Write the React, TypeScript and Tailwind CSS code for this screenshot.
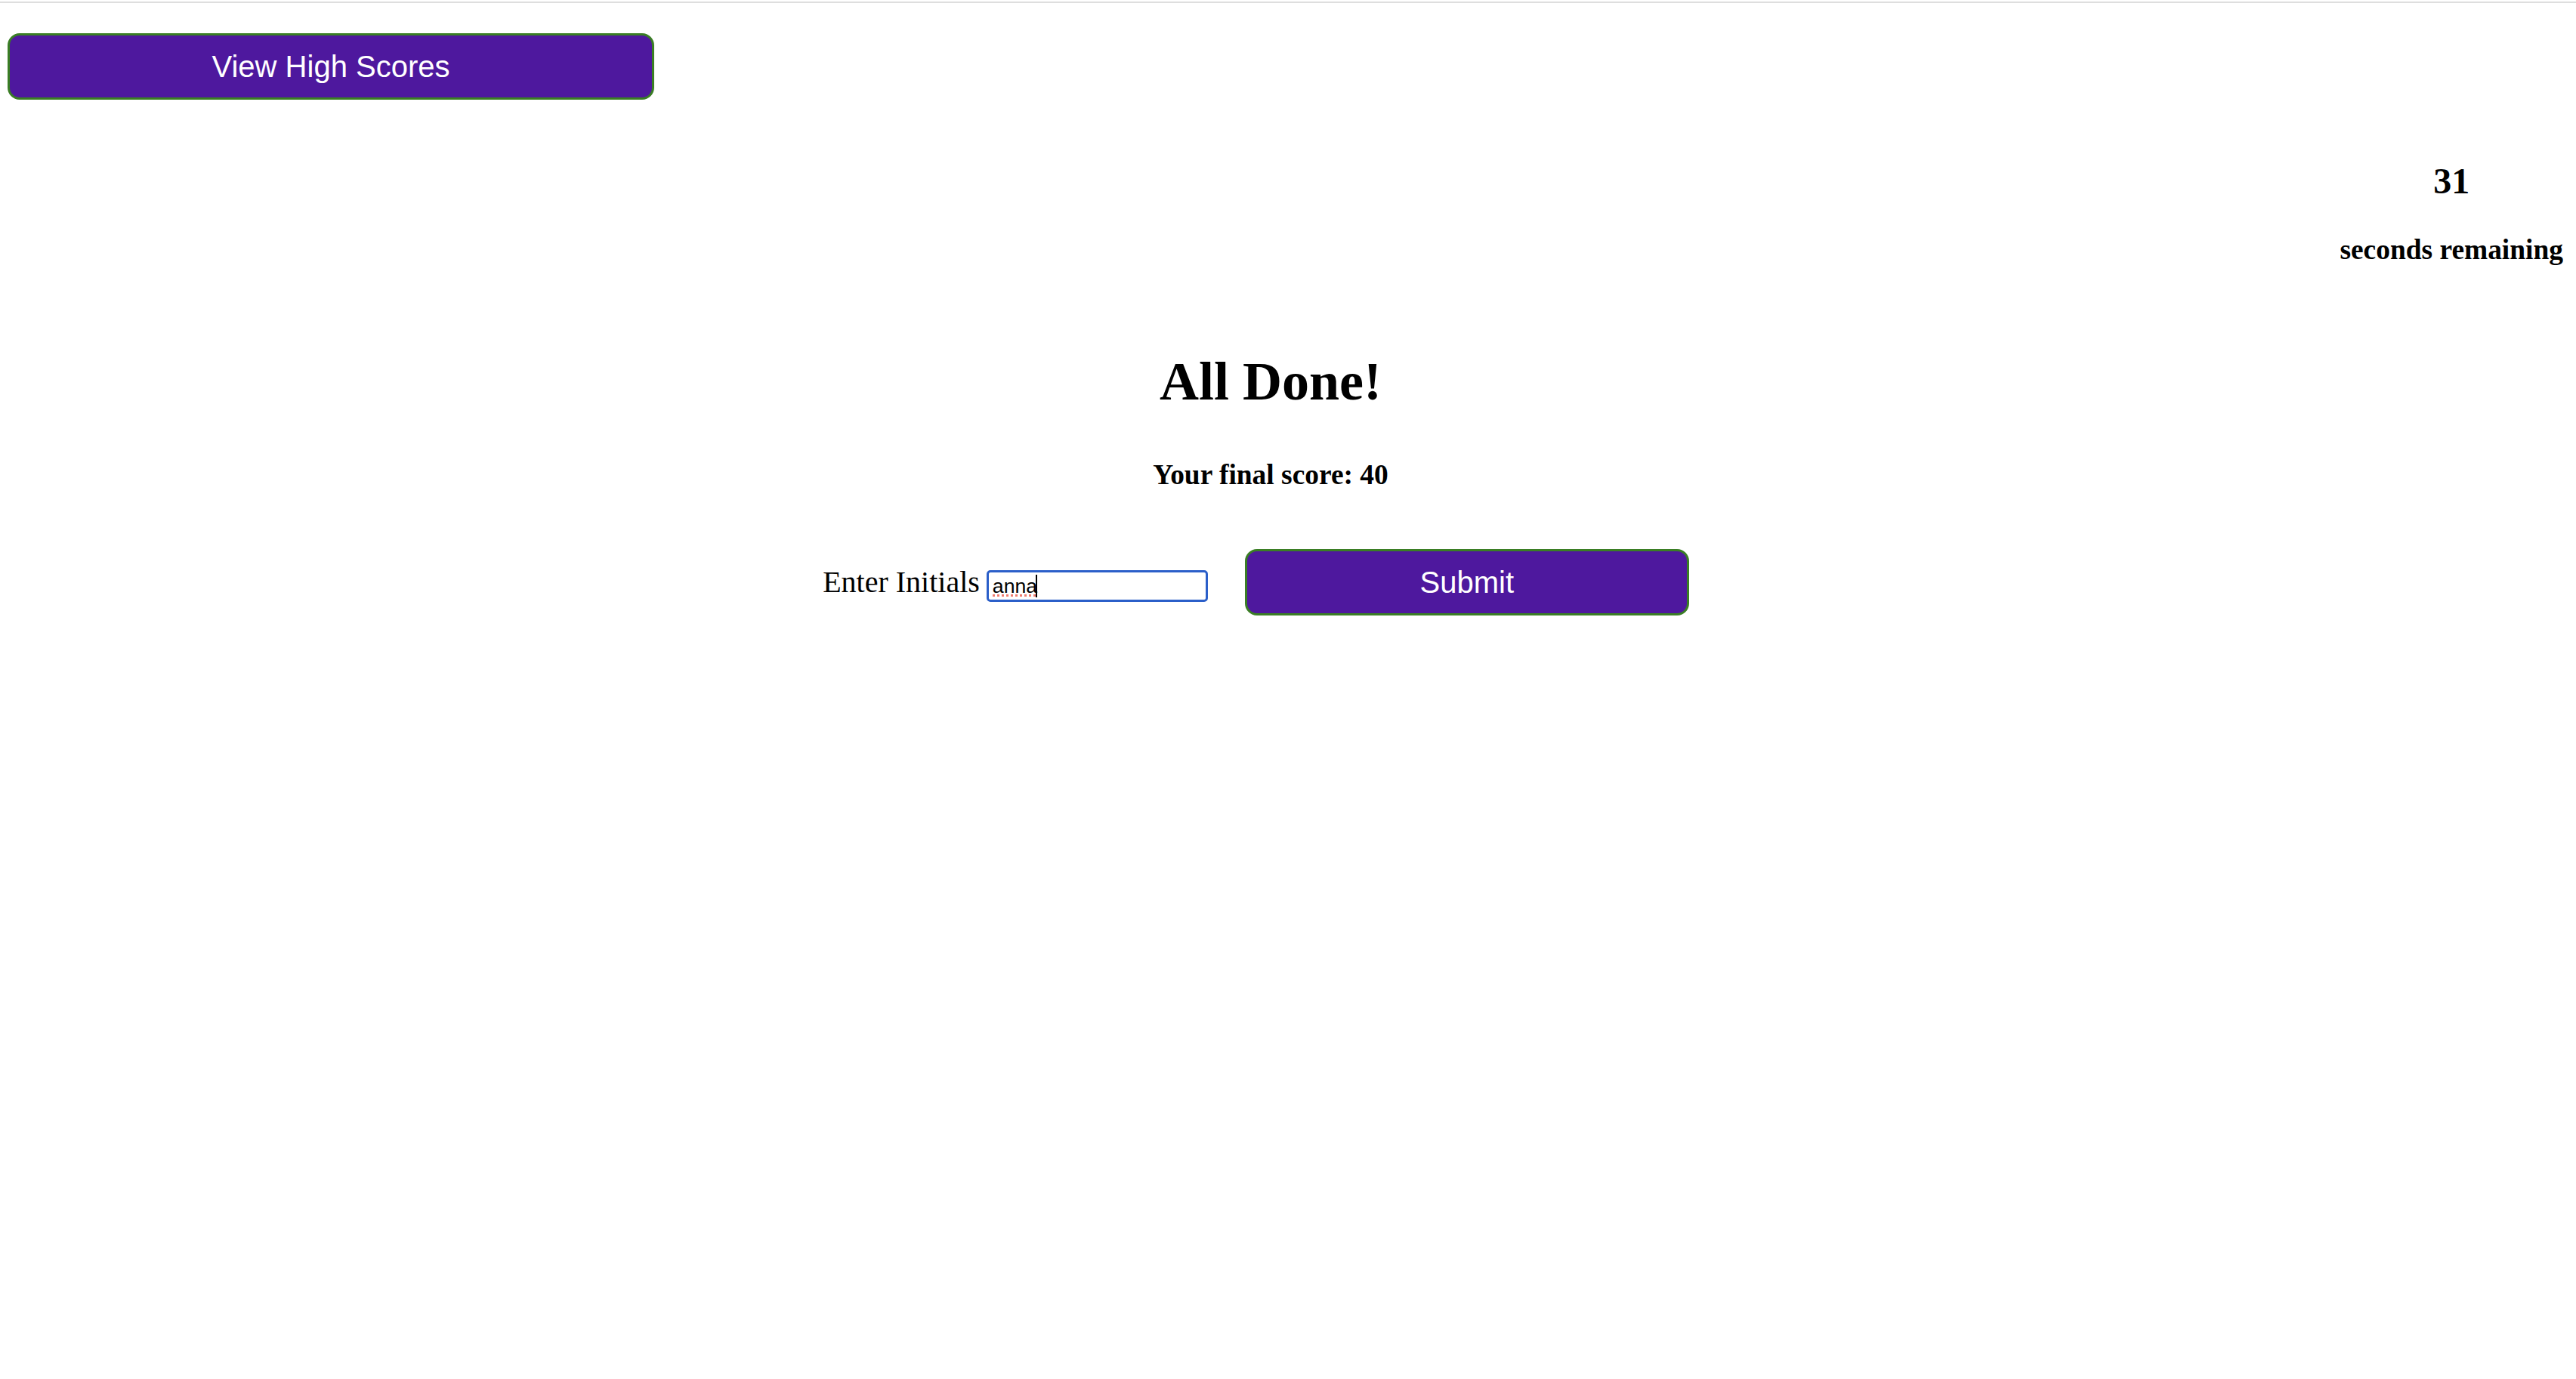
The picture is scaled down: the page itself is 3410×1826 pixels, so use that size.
import { useState } from "react";

const serif = "font-['Liberation_Serif','Times_New_Roman',serif]";
const sans = "font-['Liberation_Sans',Arial,sans-serif]";

const App = () => {
  const [initials, setInitials] = useState("anna");

  return (
    <div className="min-h-[1826px] w-[3410px] bg-white text-black">
      {/* top rule */}
      <div className="mt-[2px] h-[2px] bg-[#dedede]" />

      {/* header */}
      <div className="mt-[40px] pl-[10px]">
        <button
          className={`${sans} h-[88px] w-[856px] rounded-[16px] border-[3px] border-[#3a7e24] bg-[#4e189e] text-[40px] leading-none text-white`}
        >
          View High Scores
        </button>
      </div>

      {/* timer */}
      <div className="mt-[84px] flex justify-end pr-[17px]">
        <div className={`${serif} flex flex-col items-center font-bold`}>
          <h2 className="text-[48px] leading-[48px]">31</h2>
          <h3 className="mt-[47px] text-[37.44px] leading-[40px]">seconds remaining</h3>
        </div>
      </div>

      {/* result */}
      <div className={`${serif} w-[3364px] text-center`}>
        <h1 className="mt-[118px] text-[72px] font-bold leading-[72px]">All Done!</h1>
        <h3 className="mt-[68px] text-[37.44px] font-bold leading-[40px]">Your final score: 40</h3>

        <div className="mt-[78px] flex items-center justify-center pr-[39px]">
          <label className="text-[40px] leading-[40px]">Enter Initials</label>
          <div className="relative ml-[9px] mt-[10px]">
            <input
              value={initials}
              onChange={(e) => setInitials(e.target.value)}
              className={`${sans} block h-[42px] w-[293px] rounded-[5px] border-[3px] border-[#2b5fc9] bg-white pl-[5px] text-[26.67px] text-black outline-none`}
            />
            {/* caret + spellcheck marks */}
            <span className="absolute left-[65px] top-[6px] h-[30px] w-[2px] bg-black" />
            <span className="absolute left-[8px] top-[32px] w-[57px] border-b-[3px] border-dotted border-[#ef7b6e]" />
          </div>
          <button
            className={`${sans} ml-[49px] h-[88px] w-[588px] rounded-[16px] border-[3px] border-[#3a7e24] bg-[#4e189e] text-[40px] leading-none text-white`}
          >
            Submit
          </button>
        </div>
      </div>
    </div>
  );
};

export default App;
